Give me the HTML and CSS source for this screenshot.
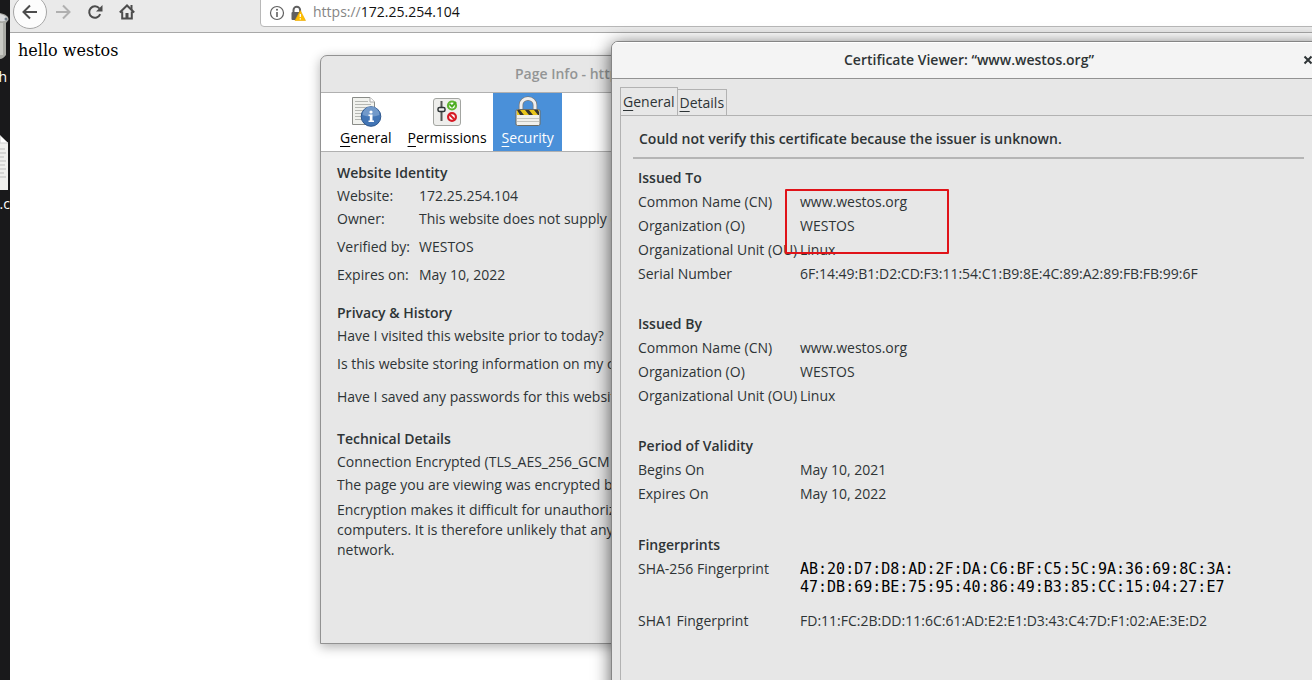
FILE: index.html
```html
<!DOCTYPE html>
<html lang="en">
<head>
<meta charset="utf-8">
<title>Certificate Viewer</title>
<link rel="stylesheet" href="styles.css">
</head>
<body>
<div class="desktop">
  <aside class="shelf">
    <svg class="trash" viewBox="0 0 9 48" aria-hidden="true"><path d="M0 1C5 2 9 4 8.500 8L6 11L6 43Q3 47 0 47Z" fill="#a9aaa5"/><path d="M0 2Q7 4 8 7Q5 10 0 9Z" fill="#d9dbdd"/><path d="M0 11H3V43H0Z" fill="#c9cac5"/><circle cx="6" cy="7" r="1.500" fill="#6e7a86"/></svg>
    <span class="shelf-label">h</span>
    <svg class="doc" viewBox="0 0 9 55" aria-hidden="true"><path d="M0 0L8 8V55H0Z" fill="#f0f0ee"/><path d="M0 1V8H8" fill="#fff" stroke="#ccc"/><path d="M0 14H5M0 18H6M0 22H4M0 26H6M0 30H5M0 34H6M0 38H4M0 42H6" stroke="#bbb"/></svg>
    <span class="shelf-label">.c</span>
  </aside>

  <main class="browser">
    <div class="toolbar">
      <button class="nav back" aria-label="Back"><svg viewBox="0 0 16 16"><path d="M15 8H1.500M8 1.500L1.500 8L8 14.500"/></svg></button>
      <button class="nav forward" aria-label="Forward"><svg viewBox="0 0 16 16"><path d="M1 8H14.500M8 1.500L14.500 8L8 14.500"/></svg></button>
      <button class="nav reload" aria-label="Reload"><svg viewBox="0 0 16 16"><path d="M13.200 10.200A5.700 5.700 0 1 1 12.400 4.500"/><path class="solid" d="M15.500 1V7.500H9Z"/></svg></button>
      <button class="nav home" aria-label="Home"><svg viewBox="0 0 16 16"><path d="M.8 8.500L8 1.500L15.200 8.500M3.200 7.500V14.500H12.800V7.500"/><path class="solid" d="M11.500 1H13.500V6H11.500ZM6.500 9H9.500V14.500H6.500Z"/></svg></button>
      <div class="address">
        <svg class="info" viewBox="0 0 16 16" aria-hidden="true"><circle cx="8" cy="8" r="6.500" fill="none" stroke="#606060" stroke-width="1.200"/><path d="M8 7V12" stroke="#606060" stroke-width="1.600"/><circle cx="8" cy="4.800" r="1" fill="#606060"/></svg>
        <svg class="warn" viewBox="0 0 16 16" aria-hidden="true"><path d="M3.500 8V5a3.300 3.300 0 0 1 6.600 0V8" fill="none" stroke="#606060" stroke-width="2"/><rect x="1.500" y="7" width="9" height="8" rx="1" fill="#606060"/><path d="M10.300 5.500L15.500 15.500H5Z" fill="#ffbf00" stroke="#e9a800" stroke-width=".6" stroke-linejoin="round"/><path d="M10.300 9V12M10.300 13.300V14.500" stroke="#fff" stroke-width="1.300"/></svg>
        <a class="url" href="https://172.25.254.104"><span class="scheme">https://</span>172.25.254.104</a>
      </div>
    </div>
    <p class="page-text">hello westos</p>
  </main>

  <section class="window page-info">
    <h1 class="titlebar">Page Info - https://172.25.254.104/</h1>
    <nav class="categories">
      <button class="category">
        <svg viewBox="0 0 32 32" aria-hidden="true"><path d="M2.500 1.500H20L24.500 6V28.500H2.500Z" fill="#f1f2ee" stroke="#8a8c88"/><path d="M20 1.500V6H24.500" fill="#fff" stroke="#aaa"/><path d="M5 5.500H18M5 8.500H21M5 11.500H21M5 14.500H18M5 17.500H15M5 20.500H14M5 23.500H14" stroke="#b5b7b2"/><circle cx="21" cy="20.500" r="9.800" fill="#4275b5" stroke="#2c568d"/><path d="M12.500 19a8.500 8.500 0 0 1 17 0Q21 22 12.500 19Z" fill="#7199ca"/><circle cx="21" cy="16" r="1.600" fill="#fff"/><path d="M18.500 18.500H22.500V24.500H24V26H18.500V24.500H19.800V20H18.500Z" fill="#fff"/></svg>
        <span><u>G</u>eneral</span>
      </button>
      <button class="category">
        <svg viewBox="0 0 32 32" aria-hidden="true"><rect x="2.500" y="2.500" width="27" height="27" rx="2.500" fill="#eeeeec" stroke="#a3a5a1"/><path d="M10.500 5V25" stroke="#555753" stroke-width="2"/><rect x="7" y="11.500" width="7" height="4" rx="1.500" fill="#eee" stroke="#2e3436" stroke-width="1.500"/><circle cx="21" cy="9.500" r="4" fill="#fff" stroke="#5db52e" stroke-width="2.200"/><path d="M18.500 8L21 10.500L25 6" fill="none" stroke="#4aaa20" stroke-width="2"/><circle cx="21" cy="21" r="3.900" fill="#fff" stroke="#d71a25" stroke-width="2.200"/><path d="M18.500 18.500L23.500 23.500" stroke="#d71a25" stroke-width="2"/></svg>
        <span><u>P</u>ermissions</span>
      </button>
      <button class="category selected">
        <svg viewBox="0 0 32 32" aria-hidden="true"><path d="M9 14V9a7 6.500 0 0 1 14 0V14" fill="none" stroke="#777" stroke-width="4.500"/><path d="M9 14V9a7 6.500 0 0 1 14 0V14" fill="none" stroke="#eee" stroke-width="3"/><rect x="4" y="13.500" width="24" height="16" rx="1.500" fill="#f0f0ec" stroke="#6b6b62"/><path d="M5 14H27V19H5Z" fill="#e8c51a"/><path d="M5 14H8L12 19H8ZM13 14H17L21 19H17ZM22 14H26L27 16V19H26Z" fill="#38352a"/><path d="M5 22.500H27M5 25.500H27" stroke="#c3c4bf"/></svg>
        <span><u>S</u>ecurity</span>
      </button>
    </nav>
    <div class="info-body">
      <section class="block">
        <h2>Website Identity</h2>
        <dl class="identity">
          <dt>Website:</dt><dd>172.25.254.104</dd>
          <dt>Owner:</dt><dd>This website does not supply o</dd>
          <dt class="spaced">Verified by:</dt><dd class="spaced">WESTOS</dd>
          <dt class="spaced">Expires on:</dt><dd class="spaced">May 10, 2022</dd>
        </dl>
      </section>
      <section class="block">
        <h2>Privacy &amp; History</h2>
        <p>Have I visited this website prior to today?</p>
        <p class="spaced">Is this website storing information on my co</p>
        <p class="loose">Have I saved any passwords for this websit</p>
      </section>
      <section class="block technical">
        <h2>Technical Details</h2>
        <p>Connection Encrypted (TLS_AES_256_GCM</p>
        <p>The page you are viewing was encrypted be</p>
        <p class="wrapped">Encryption makes it difficult for unauthorize<br>computers. It is therefore unlikely that anyo<br>network.</p>
      </section>
    </div>
  </section>

  <section class="window certificate">
    <header class="titlebar">
      <h1>Certificate Viewer: “www.westos.org”</h1>
      <button class="close" aria-label="Close"><svg viewBox="0 0 10 10"><path d="M1.500 1.500L8.500 8.500M8.500 1.500L1.500 8.500"/></svg></button>
    </header>
    <div class="tabs">
      <button class="tab active"><u>G</u>eneral</button>
      <button class="tab"><u>D</u>etails</button>
    </div>
    <div class="panel">
      <p class="verdict">Could not verify this certificate because the issuer is unknown.</p>
      <section class="group">
        <h2>Issued To</h2>
        <dl class="fields">
          <dt>Common Name (CN)</dt><dd>www.westos.org</dd>
          <dt>Organization (O)</dt><dd>WESTOS</dd>
          <dt>Organizational Unit (OU)</dt><dd>Linux</dd>
          <dt>Serial Number</dt><dd>6F:14:49:B1:D2:CD:F3:11:54:C1:B9:8E:4C:89:A2:89:FB:FB:99:6F</dd>
        </dl>
        <div class="highlight"></div>
      </section>
      <section class="group">
        <h2>Issued By</h2>
        <dl class="fields">
          <dt>Common Name (CN)</dt><dd>www.westos.org</dd>
          <dt>Organization (O)</dt><dd>WESTOS</dd>
          <dt>Organizational Unit (OU)</dt><dd>Linux</dd>
        </dl>
      </section>
      <section class="group">
        <h2>Period of Validity</h2>
        <dl class="fields">
          <dt>Begins On</dt><dd>May 10, 2021</dd>
          <dt>Expires On</dt><dd>May 10, 2022</dd>
        </dl>
      </section>
      <section class="group">
        <h2>Fingerprints</h2>
        <dl class="fields prints">
          <dt>SHA-256 Fingerprint</dt><dd class="mono">AB:20:D7:D8:AD:2F:DA:C6:BF:C5:5C:9A:36:69:8C:3A:<br>47:DB:69:BE:75:95:40:86:49:B3:85:CC:15:04:27:E7</dd>
          <dt>SHA1 Fingerprint</dt><dd>FD:11:FC:2B:DD:11:6C:61:AD:E2:E1:D3:43:C4:7D:F1:02:AE:3E:D2</dd>
        </dl>
      </section>
    </div>
  </section>
</div>
</body>
</html>
```
FILE: styles.css
```css
* { box-sizing: border-box; }
body, h1, h2, p, dl, dd { margin: 0; }
body {
  font: 14px/20px "Open Sans", "Noto Sans", sans-serif;
  color: #2e3436;
}
h1, h2 { font-size: 14px; font-weight: 600; }
button { font: inherit; color: inherit; border: 0; padding: 0; background: none; }
u { text-underline-offset: 3px; text-decoration-skip-ink: none; }

.desktop {
  position: relative;
  display: flex;
  height: 100vh;
  overflow: hidden;
  background: #fff;
}

.shelf {
  flex: none;
  width: 10px;
  padding-top: 12px;
  overflow: hidden;
  background: #19191b;
  color: #fff;
}
.shelf svg { display: block; width: 9px; }
.trash { height: 48px; }
.doc { height: 55px; margin: 48px 0 4px; }
.shelf-label { display: flex; justify-content: flex-end; width: 7px; height: 20px; margin-top: 7px; }
.doc + .shelf-label { width: 10px; margin-top: 0; }

.browser { flex: 1; min-width: 0; }
.toolbar {
  display: flex;
  align-items: flex-start;
  height: 33px;
  overflow: hidden;
  background: #eaeaea;
  border-bottom: 1px solid #a8a8a8;
}
.nav { flex: none; display: grid; place-items: center; width: 32px; height: 24px; }
.nav svg { width: 16px; height: 16px; }
.nav path { fill: none; stroke: #4c4c4c; stroke-width: 2; }
.nav .solid { fill: #4c4c4c; stroke: none; }
.back {
  width: 34px;
  height: 34px;
  margin: -5px 3px 0;
  border: 1px solid #a6a6a6;
  border-radius: 50%;
  background: #fcfcfc;
}
.forward { width: 26px; }
.nav.forward path { stroke: #b0b0b0; }
.reload { width: 38px; }
.home { width: 26px; }
.address {
  flex: 1;
  display: flex;
  align-items: center;
  height: 34px;
  margin: -7px -4px 0 120px;
  padding-left: 8px;
  border: 1px solid #b8b8b8;
  border-radius: 4px;
  background: #fff;
}
.address svg { width: 16px; height: 16px; margin: 5px 5px 0 0; }
.url { margin: 4px 0 0 2px; color: #111; text-decoration: none; }
.scheme { color: #858585; }
.page-text { padding: 8px; font: 16px/19px "DejaVu Serif", serif; color: #000; }

.window {
  position: absolute;
  overflow: hidden;
  background: #e7e7e7;
  border: 1px solid #929292;
  border-radius: 7px 7px 0 0;
}
.titlebar { white-space: nowrap; text-align: center; }

.page-info {
  left: 320px;
  top: 55px;
  width: 620px;
  height: 589px;
  box-shadow: 0 3px 12px rgba(0, 0, 0, .3);
}
.page-info .titlebar {
  height: 37px;
  line-height: 36px;
  color: #939595;
  border-bottom: 1px solid #b0b0b0;
}
.categories {
  display: flex;
  height: 59px;
  padding-left: 16px;
  background: #fff;
  border-bottom: 1px solid #b0b0b0;
  color: #000;
}
.category { display: flex; flex-direction: column; align-items: center; padding: 3px 6px 0 8px; }
.category:first-child { padding-left: 3px; padding-right: 8px; }
.category svg { display: block; width: 32px; height: 32px; }
.category.selected { padding-left: 9px; padding-right: 8px; background: #4a90d9; color: #fff; }
.info-body { display: grid; gap: 18px; padding: 11px 16px; white-space: nowrap; }
.block { display: grid; row-gap: 3px; }
.identity { display: grid; grid-template-columns: 82px 1fr; row-gap: 3px; }
.spaced { margin-top: 5px; }
.loose { margin-top: 10px; }
.technical { margin-top: 4px; }
.wrapped { margin-top: 2px; }

.certificate {
  left: 611px;
  right: -15px;
  top: 41px;
  bottom: -20px;
  border-color: #858585;
  box-shadow: 0 3px 18px rgba(0, 0, 0, .65);
}
.certificate .titlebar {
  display: grid;
  grid-template-columns: 40px 1fr 40px;
  align-items: center;
  height: 37px;
  background: #f4f4f4;
  border-bottom: 1px solid #929292;
  box-shadow: inset 0 1px #fff;
}
.certificate .titlebar h1 { grid-column: 2; }
.close { display: grid; place-items: center; width: 10px; height: 20px; margin-left: 17px; }
.close svg { width: 10px; height: 10px; }
.close path { stroke: #2e3436; stroke-width: 2; }
.tabs { display: flex; align-items: flex-end; padding: 8px 8px 0; }
.tab { height: 26px; padding: 0 2px; border: 1px solid #b2b2b2; border-bottom: 0; }
.tab + .tab { border-left: 0; }
.tab.active { height: 28px; }
.panel {
  min-height: 580px;
  margin-left: 8px;
  padding: 13px 22px 0 12px;
  border: solid #b2b2b2;
  border-width: 1px 0 0 1px;
}
.verdict { padding: 0 6px 8px; font-weight: 600; border-bottom: 2px solid #b5b5b5; }
.group { position: relative; padding: 7px 5px 0; margin-bottom: 19px; }
.group:last-child { padding-top: 8px; }
.group h2 { line-height: 24px; }
.fields { display: grid; grid-template-columns: 162px 1fr; line-height: 24px; white-space: nowrap; }
.prints { row-gap: 10px; }
.mono { padding: 3px 0; font: 15px/18px "DejaVu Sans Mono", monospace; color: #000; }
.highlight {
  position: absolute;
  left: 152px;
  top: 30px;
  width: 164px;
  height: 65px;
  border: 2px solid #e01319;
  border-radius: 1px;
}
```
